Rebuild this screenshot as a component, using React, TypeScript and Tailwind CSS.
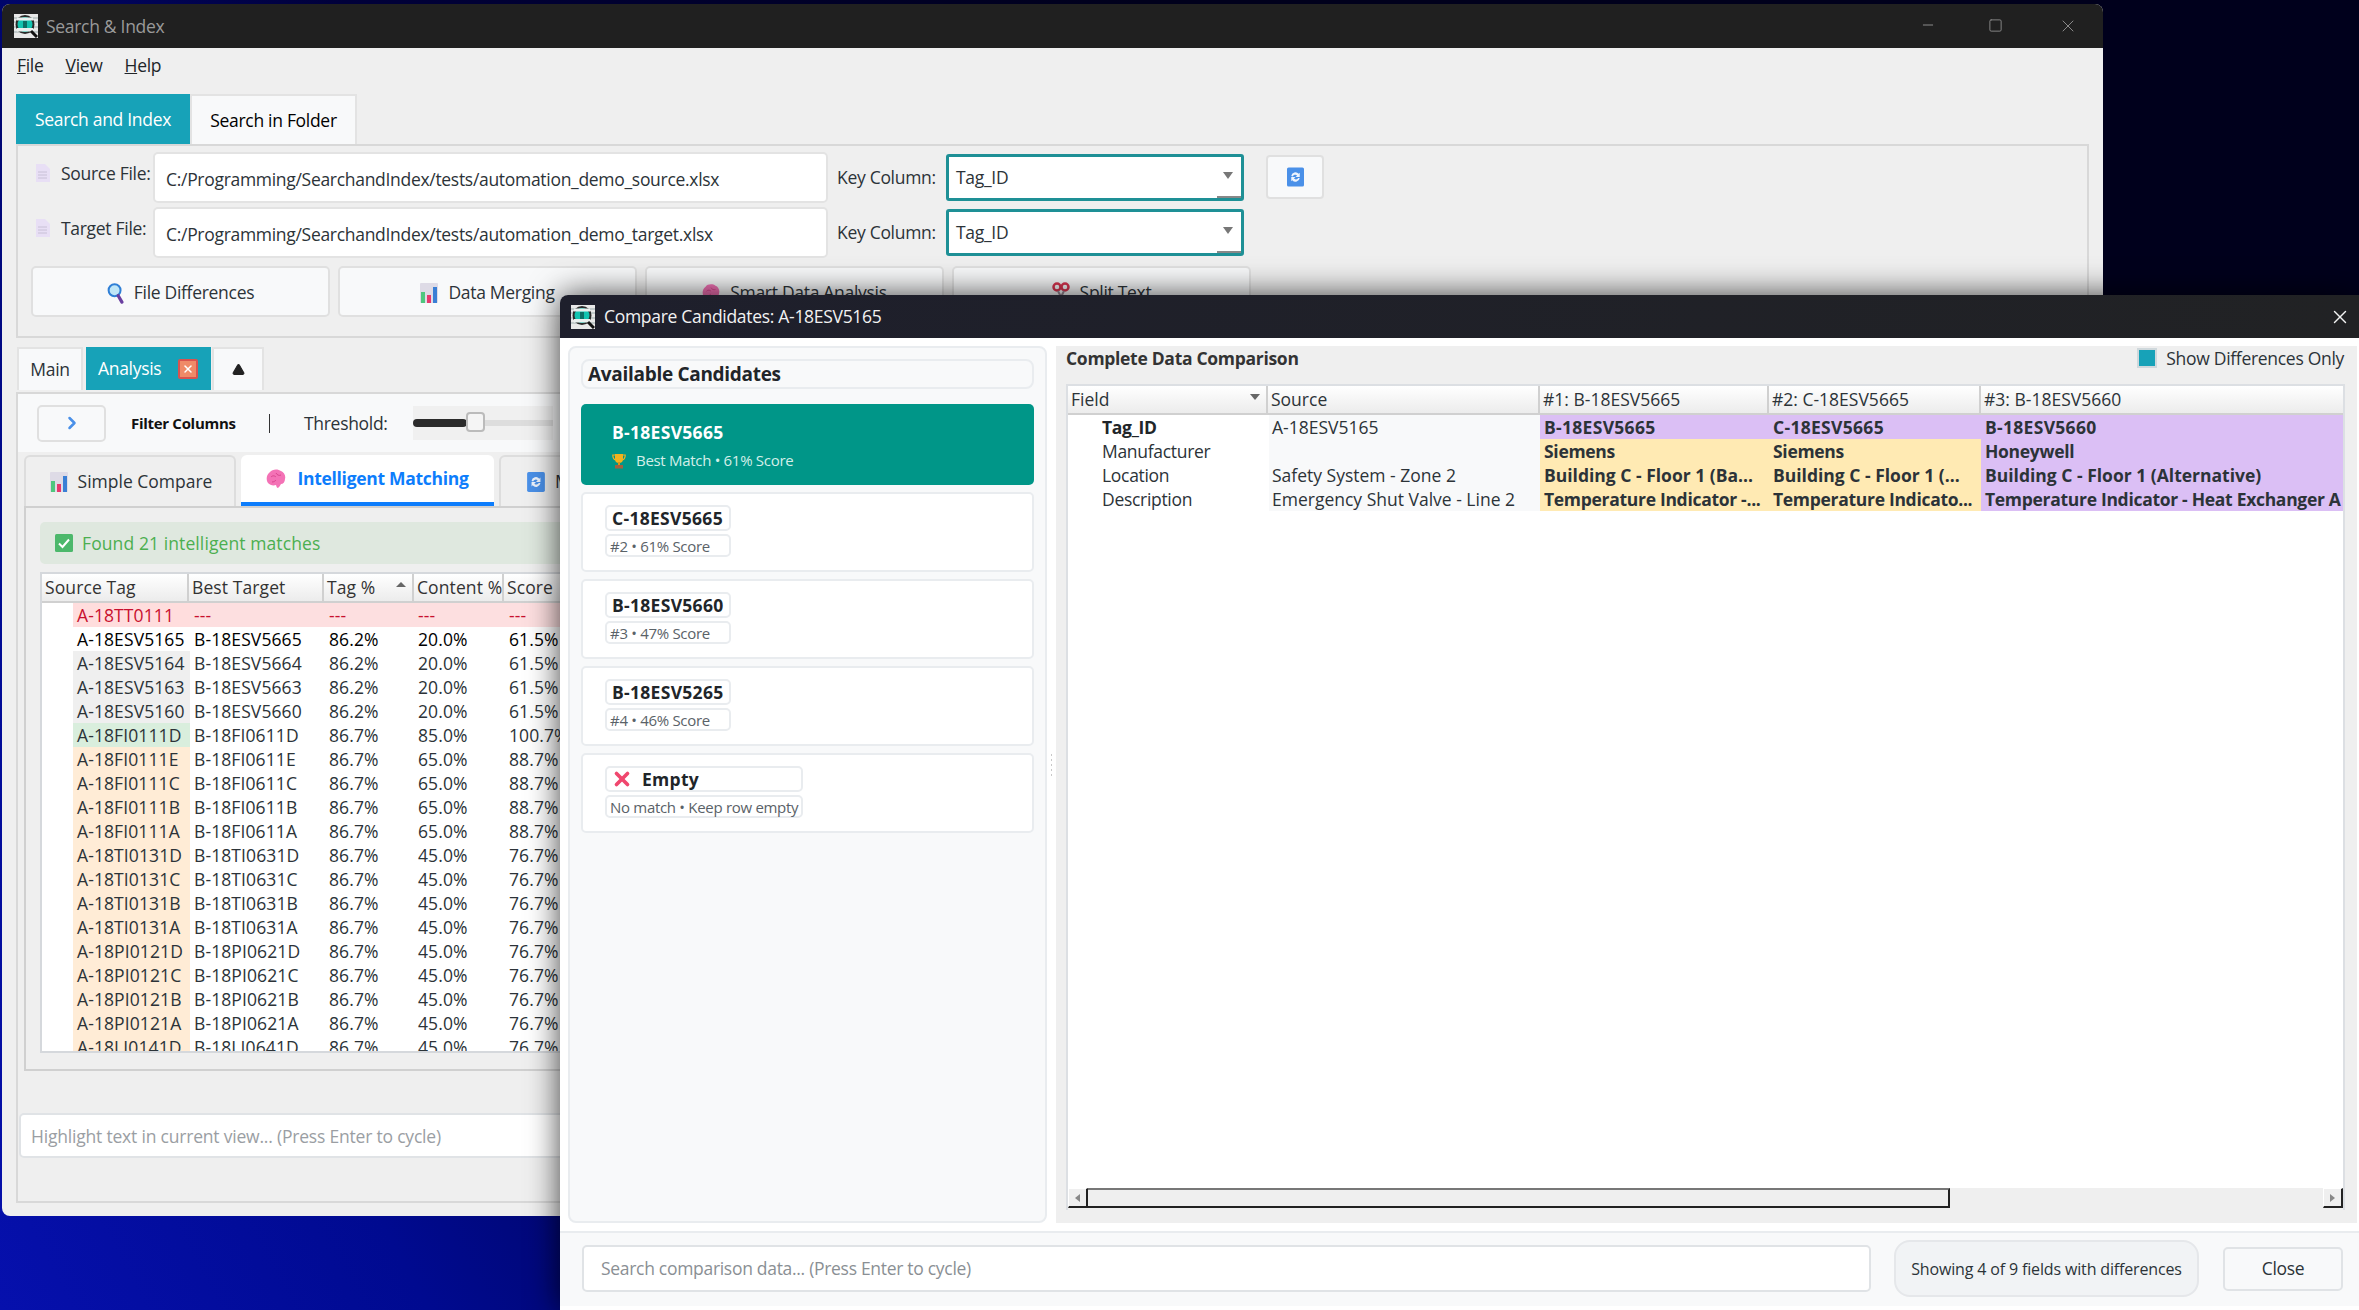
import { X, Minus, Square, ChevronRight, Triangle } from "lucide-react";

function Logo() {
  return (
    <svg viewBox="0 0 24 24" className="w-[24px] h-[24px] shrink-0">
      <rect width="24" height="24" fill="#e8e8e8" />
      <path d="M0 4h24M0 8h24M0 13h24M0 18h24" stroke="#9aa" strokeWidth="1" />
      <circle cx="11" cy="10.5" r="8.5" fill="#12c4b0" stroke="#2a2a2a" strokeWidth="2" />
      <rect x="3" y="3.500" width="16" height="3" fill="#e9efee" />
      <rect x="3" y="14" width="16" height="3.500" fill="#e9efee" />
      <rect x="9" y="7" width="4" height="7" fill="#0b6f66" />
      <path d="M17 17l6 6" stroke="#111" strokeWidth="3" />
    </svg>
  );
}

function PageIcon() {
  return (
    <svg viewBox="0 0 14 18" className="w-[14px] h-[18px] shrink-0">
      <path d="M0 0h9l5 5v13H0z" fill="#e8dff5" />
      <path d="M2 8h9M2 11h9M2 14h9" stroke="#c8c0d6" strokeWidth="1" />
    </svg>
  );
}

function ChartIcon() {
  return (
    <svg viewBox="0 0 18 20" className="w-[18px] h-[20px] shrink-0">
      <rect width="18" height="20" rx="1" fill="#dedbe6" />
      <rect x="1" y="9" width="4" height="11" fill="#4fc77e" />
      <rect x="7" y="12" width="4" height="8" fill="#e8386d" />
      <rect x="13" y="4" width="4" height="16" fill="#3a7fd5" />
    </svg>
  );
}

function LensIcon() {
  return (
    <svg viewBox="0 0 18 24" className="w-[17px] h-[22px] shrink-0">
      <circle cx="8" cy="9" r="6.5" fill="#bfe6f7" stroke="#2f7fd6" strokeWidth="2.2" />
      <path d="M12 15l4 7" stroke="#6a3fa0" strokeWidth="3.5" strokeLinecap="round" />
    </svg>
  );
}

function BrainIcon({ size = "w-[20px] h-[20px]" }: { size?: string }) {
  return (
    <svg viewBox="0 0 20 20" className={size + " shrink-0"}>
      <path
        d="M4 3c2-3 8-3.500 11-1 3 1 5 5 4 8 0 3-2 5-4 5-1 2-2 3-3 4-1 0-1.500-1-2-3-3 1-6 0-8-2-2-3-2-8 2-11z"
        fill="#f472b6"
      />
      <path d="M5 8c2-2 4-1 5 0M10 4c1 2 3 3 5 2M6 13c2 0 3-1 4-2" stroke="#d9468f" strokeWidth="1" fill="none" />
    </svg>
  );
}

function RefreshIcon({ size = "w-[17px] h-[20px]" }: { size?: string }) {
  return (
    <svg viewBox="0 0 16 18" className={size + " shrink-0"}>
      <rect width="16" height="18" rx="1.500" fill="#4a90e8" />
      <path d="M4 8a4 4 0 0 1 7-2l1-1v4H8l1.500-1.500A2.500 2.500 0 0 0 5.500 8.500z" fill="#eef4fd" />
      <path d="M12 10a4 4 0 0 1-7 2l-1 1V9h4l-1.500 1.500a2.500 2.500 0 0 0 4 -.5z" fill="#eef4fd" />
    </svg>
  );
}

function ScissorsIcon() {
  return (
    <svg viewBox="0 0 18 22" className="w-[18px] h-[22px] shrink-0">
      <circle cx="5" cy="5" r="3.500" fill="none" stroke="#d9344f" strokeWidth="2.500" />
      <circle cx="13" cy="5" r="3.500" fill="none" stroke="#d9344f" strokeWidth="2.500" />
      <path d="M6 9l3 6 3-6M9 15v7" stroke="#9a8a96" strokeWidth="2" fill="none" />
    </svg>
  );
}

function TrophyIcon() {
  return (
    <svg viewBox="0 0 14 16" className="w-[14px] h-[16px] shrink-0">
      <path d="M3 1h8v5a4 4 0 0 1-8 0z" fill="#f2b21c" />
      <path d="M3 2H0.800c0 3 1 4.500 3 5M11 2h2.200c0 3-1 4.500-3 5" stroke="#f2b21c" strokeWidth="1.200" fill="none" />
      <rect x="6" y="9" width="2" height="3" fill="#d9941a" />
      <rect x="3" y="12" width="8" height="3.500" fill="#a5603c" />
    </svg>
  );
}

function CheckIcon() {
  return (
    <svg viewBox="0 0 18 18" className="w-[18px] h-[18px] shrink-0">
      <rect width="18" height="18" rx="1.500" fill="#4cb86b" />
      <path d="M4 9.500l3.500 3.500L14 5.500" stroke="#fff" strokeWidth="2" fill="none" />
    </svg>
  );
}

function Combo() {
  return (
    <div className="relative w-[298px] h-[47px] bg-white border-[3px] border-[#1e9096] rounded-[3px] flex items-center pl-[7px] mt-[2px]">
      <span>Tag_ID</span>
      <span className="absolute right-[8px] top-[15px] w-0 h-0 border-l-[5px] border-r-[5px] border-t-[7px] border-l-transparent border-r-transparent border-t-[#777]" />
      <span className="absolute right-0 bottom-0 w-[24px] h-[2px] bg-[#888]" />
    </div>
  );
}

function FileRow({ label, path }: { label: string; path: string }) {
  return (
    <div className="flex h-[51px] items-start">
      <div className="w-[135px] shrink-0 flex items-center gap-[11px] pl-[18px] pt-[8px]">
        <PageIcon />
        <span className="whitespace-nowrap">{label}</span>
      </div>
      <div className="w-[675px] h-[51px] shrink-0 bg-white border-2 border-[#e3e3e3] rounded-[5px] flex items-center pl-[11px] pt-[4px]">
        {path}
      </div>
      <span className="ml-[9px] w-[109px] shrink-0 pt-[12px] whitespace-nowrap">Key Column:</span>
      <Combo />
    </div>
  );
}

function ActionButton({ icon, label }: { icon: React.ReactNode; label: string }) {
  return (
    <div className="w-[299px] h-[51px] shrink-0 bg-[#f8f9fa] border-2 border-[#e0e0e0] rounded-[5px] flex items-center justify-center gap-[10px] pt-[2px]">
      {icon}
      <span>{label}</span>
    </div>
  );
}

type MatchRow = { src: string; target: string; tag: string; content: string; score: string; bg: string; tone: string };

const matchRows: MatchRow[] = [
  { src: "A-18TT0111", target: "---", tag: "---", content: "---", score: "---", bg: "bg-[#fdd]", tone: "miss" },
  { src: "A-18ESV5165", target: "B-18ESV5665", tag: "86.2%", content: "20.0%", score: "61.5%", bg: "bg-white", tone: "selected" },
  { src: "A-18ESV5164", target: "B-18ESV5664", tag: "86.2%", content: "20.0%", score: "61.5%", bg: "bg-[#efefef]", tone: "" },
  { src: "A-18ESV5163", target: "B-18ESV5663", tag: "86.2%", content: "20.0%", score: "61.5%", bg: "bg-[#efefef]", tone: "" },
  { src: "A-18ESV5160", target: "B-18ESV5660", tag: "86.2%", content: "20.0%", score: "61.5%", bg: "bg-[#efefef]", tone: "" },
  { src: "A-18FI0111D", target: "B-18FI0611D", tag: "86.7%", content: "85.0%", score: "100.7%", bg: "bg-[#d9eedd]", tone: "" },
  { src: "A-18FI0111E", target: "B-18FI0611E", tag: "86.7%", content: "65.0%", score: "88.7%", bg: "bg-[#ffecd6]", tone: "" },
  { src: "A-18FI0111C", target: "B-18FI0611C", tag: "86.7%", content: "65.0%", score: "88.7%", bg: "bg-[#ffecd6]", tone: "" },
  { src: "A-18FI0111B", target: "B-18FI0611B", tag: "86.7%", content: "65.0%", score: "88.7%", bg: "bg-[#ffecd6]", tone: "" },
  { src: "A-18FI0111A", target: "B-18FI0611A", tag: "86.7%", content: "65.0%", score: "88.7%", bg: "bg-[#ffecd6]", tone: "" },
  { src: "A-18TI0131D", target: "B-18TI0631D", tag: "86.7%", content: "45.0%", score: "76.7%", bg: "bg-[#ffecd6]", tone: "" },
  { src: "A-18TI0131C", target: "B-18TI0631C", tag: "86.7%", content: "45.0%", score: "76.7%", bg: "bg-[#ffecd6]", tone: "" },
  { src: "A-18TI0131B", target: "B-18TI0631B", tag: "86.7%", content: "45.0%", score: "76.7%", bg: "bg-[#ffecd6]", tone: "" },
  { src: "A-18TI0131A", target: "B-18TI0631A", tag: "86.7%", content: "45.0%", score: "76.7%", bg: "bg-[#ffecd6]", tone: "" },
  { src: "A-18PI0121D", target: "B-18PI0621D", tag: "86.7%", content: "45.0%", score: "76.7%", bg: "bg-[#ffecd6]", tone: "" },
  { src: "A-18PI0121C", target: "B-18PI0621C", tag: "86.7%", content: "45.0%", score: "76.7%", bg: "bg-[#ffecd6]", tone: "" },
  { src: "A-18PI0121B", target: "B-18PI0621B", tag: "86.7%", content: "45.0%", score: "76.7%", bg: "bg-[#ffecd6]", tone: "" },
  { src: "A-18PI0121A", target: "B-18PI0621A", tag: "86.7%", content: "45.0%", score: "76.7%", bg: "bg-[#ffecd6]", tone: "" },
  { src: "A-18LI0141D", target: "B-18LI0641D", tag: "86.7%", content: "45.0%", score: "76.7%", bg: "bg-[#ffecd6]", tone: "" },
];

function HeaderCell({ label, w, arrow }: { label: string; w: string; arrow?: boolean }) {
  return (
    <div className={w + " relative shrink-0 h-[29px] flex items-center pl-[3px] border-r-2 border-b-2 border-[#d0d0d0] bg-gradient-to-b from-white to-[#ececec] whitespace-nowrap text-[#333]"}>
      {label}
      {arrow && <span className="absolute right-[6px] top-[8px] w-0 h-0 border-l-[5px] border-r-[5px] border-b-[5px] border-l-transparent border-r-transparent border-b-[#666]" />}
    </div>
  );
}

function MatchTable() {
  return (
    <div className="w-[1500px] h-[481px] overflow-hidden bg-white border-2 border-[#d5d8dc] ml-[14px] mt-[8px] tracking-[0.1px]">
      <div className="flex">
        <HeaderCell label="Source Tag" w="w-[147px]" />
        <HeaderCell label="Best Target" w="w-[135px]" />
        <HeaderCell label="Tag %" w="w-[90px]" arrow />
        <HeaderCell label="Content %" w="w-[90px]" />
        <HeaderCell label="Score" w="w-[90px]" />
      </div>
      {matchRows.map((r) => {
        const tone = r.tone === "miss" ? "text-[#c8102e]" : r.tone === "selected" ? "text-[#000]" : "text-[#2c3338]";
        return (
          <div key={r.src} className={"flex h-[24px] items-center " + tone + (r.tone === "miss" ? " bg-[#fddfe0]" : "")}>
            <div className={"w-[31px] h-full shrink-0 " + (r.tone === "miss" ? "bg-white" : "")} />
            <div className={"w-[117px] h-full shrink-0 pl-[4px] flex items-center whitespace-nowrap " + r.bg}>{r.src}</div>
            <div className="w-[134px] shrink-0 pl-[4px]">{r.target}</div>
            <div className="w-[90px] shrink-0 pl-[5px]">{r.tag}</div>
            <div className="w-[90px] shrink-0 pl-[4px]">{r.content}</div>
            <div className="w-[90px] shrink-0 pl-[5px]">{r.score}</div>
          </div>
        );
      })}
    </div>
  );
}

function MainWindow() {
  return (
    <div className="absolute left-[2px] top-[4px] w-[2101px] h-[1212px] bg-[#efefef] rounded-[8px] overflow-hidden flex flex-col">
      <div className="h-[44px] shrink-0 bg-[#202020] flex items-center pl-[12px] text-[#9a9a9a] relative">
        <Logo />
        <span className="ml-[8px]">Search &amp; Index</span>
        <Minus className="absolute left-[1918px] top-[13px] w-[16px] h-[16px] text-[#8a8a8a]" strokeWidth={1.5} />
        <Square className="absolute left-[1986px] top-[14px] w-[15px] h-[15px] text-[#8a8a8a]" strokeWidth={1.5} />
        <X className="absolute left-[2056px] top-[12px] w-[20px] h-[20px] text-[#8a8a8a]" strokeWidth={1.2} />
      </div>
      <div className="h-[46px] shrink-0 flex items-center gap-[22px] pl-[15px] pb-[12px] text-[#212529]">
        <span><u>F</u>ile</span>
        <span><u>V</u>iew</span>
        <span><u>H</u>elp</span>
      </div>
      <div className="flex ml-[14px] h-[50px] shrink-0">
        <div className="w-[174px] bg-[#17a2b8] text-white flex items-center justify-center">Search and Index</div>
        <div className="w-[167px] bg-[#f8f9fa] border-2 border-b-0 border-[#e3e3e3] flex items-center justify-center">Search in Folder</div>
      </div>
      <div className="ml-[14px] w-[2073px] h-[194px] shrink-0 border-2 border-[#d8d8d8] pt-[6px] text-[#2c3338] relative">
        <FileRow label="Source File:" path="C:/Programming/SearchandIndex/tests/automation_demo_source.xlsx" />
        <div className="h-[4px]" />
        <FileRow label="Target File:" path="C:/Programming/SearchandIndex/tests/automation_demo_target.xlsx" />
        <div className="flex gap-[8px] ml-[13px] mt-[8px]">
          <ActionButton icon={<LensIcon />} label="File Differences" />
          <ActionButton icon={<ChartIcon />} label="Data Merging" />
          <ActionButton icon={<BrainIcon size="w-[18px] h-[18px]" />} label="Smart Data Analysis" />
          <ActionButton icon={<ScissorsIcon />} label="Split Text" />
        </div>
        <div className="absolute left-[1248px] top-[9px] w-[58px] h-[44px] bg-[#f8f9fa] border-2 border-[#e0e0e0] rounded-[4px] flex items-center justify-center">
          <RefreshIcon />
        </div>
      </div>
      <div className="flex ml-[15px] mt-[9px] h-[43px] shrink-0 text-[#2c3338]">
        <div className="w-[66px] bg-[#f8f9fa] border-2 border-b-0 border-[#e3e3e3] flex items-center justify-center">Main</div>
        <div className="ml-[3px] w-[125px] bg-[#17a2b8] text-white flex items-center pl-[12px] gap-[17px]">
          Analysis
          <span className="w-[20px] h-[20px] shrink-0 bg-[#ef8a68] border-2 border-[#d9534f] rounded-[2px] flex items-center justify-center">
            <X className="w-[12px] h-[12px] text-white" strokeWidth={3} />
          </span>
        </div>
        <div className="ml-[1px] w-[52px] bg-[#f8f9fa] border-2 border-b-0 border-[#e3e3e3] flex items-center justify-center">
          <Triangle className="w-[15px] h-[13px] text-[#222] fill-[#222]" />
        </div>
      </div>
      <div className="ml-[14px] mt-[2px] w-[2073px] flex-1 border-2 border-[#d8d8d8] text-[#2c3338] flex flex-col mb-[13px]">
        <div className="h-[58px] shrink-0 bg-[#f8f9fa] flex items-center pl-[19px]">
          <div className="w-[69px] h-[37px] bg-[#f8f9fa] border-2 border-[#e0e0e0] rounded-[5px] flex items-center justify-center">
            <ChevronRight className="w-[20px] h-[20px] text-[#4a90e8]" strokeWidth={3} />
          </div>
          <span className="ml-[25px] w-[102px] font-bold text-[15px] text-[#111] whitespace-nowrap">Filter Columns</span>
          <span className="ml-[36px] w-px h-[19px] bg-[#333]" />
          <span className="ml-[34px] w-[82px] whitespace-nowrap">Threshold:</span>
          <div className="ml-[27px] w-[140px] h-[34px] bg-[#f0f0f0] flex items-center relative">
            <div className="w-[54px] h-[8px] rounded-full bg-[#2b2b2b]" />
            <div className="w-[86px] h-[6px] bg-[#ddd]" />
            <span className="absolute left-[53px] top-[6px] w-[19px] h-[20px] bg-[#f5f5f5] border-2 border-[#bbb] rounded-[4px]" />
          </div>
        </div>
        <div className="flex ml-[6px] mt-[3px] h-[51px] shrink-0">
          <div className="w-[212px] border-2 border-b-0 border-[#ddd] bg-[#efefef] rounded-t-[6px] flex items-center justify-center gap-[10px] tracking-[0px] pl-[2px]">
            <ChartIcon />
            Simple Compare
          </div>
          <div className="ml-[5px] w-[253px] bg-white border-b-[4px] border-[#0d7dfc] rounded-t-[6px] flex items-center justify-center gap-[11px] text-[#0d7dfc] font-bold">
            <BrainIcon />
            Intelligent Matching
          </div>
          <div className="ml-[5px] w-[300px] border-2 border-b-0 border-[#ddd] bg-[#efefef] rounded-t-[6px] flex items-center pl-[26px] gap-[10px]">
            <RefreshIcon size="w-[18px] h-[20px]" />
            Manual
          </div>
        </div>
        <div className="ml-[6px] mr-[6px] h-[565px] shrink-0 border-2 border-[#d0d0d0] pt-[14px]">
          <div className="ml-[14px] h-[42px] w-[1500px] bg-[#dfe8df] rounded-[5px] flex items-center pl-[15px] gap-[9px] text-[#4caf50] tracking-[0.1px]">
            <CheckIcon />
            Found 21 intelligent matches
          </div>
          <MatchTable />
        </div>
        <div className="mt-[42px] ml-[1px] w-[1800px] h-[45px] bg-white border-2 border-[#e0e3e6] rounded-[5px] flex items-center pl-[10px] pt-[2px] text-[#9a9ea3] tracking-[-0.2px]">
          Highlight text in current view... (Press Enter to cycle)
        </div>
      </div>
    </div>
  );
}

function Candidate({ name, sub, icon, wide }: { name: string; sub: string; icon?: boolean; wide?: boolean }) {
  const w = wide ? "w-[198px]" : "w-[126px]";
  return (
    <div className="h-[80px] bg-white border-2 border-[#e9ecef] rounded-[5px] pl-[22px] pt-[11px] flex flex-col gap-[3px]">
      <div className={w + " h-[26px] border-2 border-[#e9ecef] rounded-[5px] flex items-center pl-[5px] gap-[9px] font-bold text-[#212529] tracking-[0.3px]"}>
        {icon && <X className="w-[22px] h-[22px] text-[#f0476e] -ml-[1px]" strokeWidth={4} />}
        {name}
      </div>
      <div className={w + " h-[23px] border-2 border-[#e9ecef] rounded-[5px] flex items-center pl-[3px] pt-[1px] text-[15px] text-[#5a6268] whitespace-nowrap"}>
        {sub}
      </div>
    </div>
  );
}

const compareRows = [
  {
    field: "Tag_ID",
    bold: true,
    source: "A-18ESV5165",
    a: "B-18ESV5665",
    b: "C-18ESV5665",
    c: "B-18ESV5660",
    tone: "bg-[#dbbff5]",
    track: "tracking-[0.3px]",
  },
  {
    field: "Manufacturer",
    source: "",
    a: "Siemens",
    b: "Siemens",
    c: "Honeywell",
    tone: "bg-[#ffeab3]",
    track: "",
  },
  {
    field: "Location",
    source: "Safety System - Zone 2",
    a: "Building C - Floor 1 (Ba...",
    b: "Building C - Floor 1 (...",
    c: "Building C - Floor 1 (Alternative)",
    tone: "bg-[#ffeab3]",
    track: "tracking-[0px]",
  },
  {
    field: "Description",
    source: "Emergency Shut Valve - Line 2",
    a: "Temperature Indicator -...",
    b: "Temperature Indicato...",
    c: "Temperature Indicator - Heat Exchanger A",
    tone: "bg-[#ffeab3]",
    track: "",
  },
];

function CompareDialog() {
  return (
    <div className="absolute left-[560px] top-[295px] w-[1799px] h-[1015px] bg-white rounded-tl-[8px] overflow-hidden flex flex-col shadow-[0_0_32px_rgba(0,0,0,0.75)] text-[#2c3338]">
      <div className="h-[43px] shrink-0 bg-gradient-to-r from-[#1e1f2c] to-[#212224] flex items-center pl-[11px] text-[#f2f2f2] relative">
        <Logo />
        <span className="ml-[9px]">Compare Candidates: A-18ESV5165</span>
        <X className="absolute right-[8px] top-[11px] w-[22px] h-[22px] text-[#f2f2f2]" strokeWidth={1.5} />
      </div>
      <div className="flex pt-[8px] pl-[8px] pr-[2px] h-[885px] shrink-0">
        <div className="w-[479px] shrink-0 bg-[#f8f9fa] border-2 border-[#e9ecef] rounded-[8px] px-[11px] pt-[11px] flex flex-col">
          <div className="h-[30px] border-2 border-[#e9ecef] rounded-[8px] flex items-center pl-[5px] font-bold text-[19px] text-[#212529]">
            Available Candidates
          </div>
          <div className="mt-[15px] h-[81px] bg-[#009688] rounded-[5px] pl-[31px] pt-[15px] text-white">
            <div className="font-bold tracking-[0.3px]">B-18ESV5665</div>
            <div className="mt-[4px] flex items-center gap-[10px] text-[15px] text-[#d4efe9]">
              <TrophyIcon />
              Best Match • 61% Score
            </div>
          </div>
          <div className="mt-[7px] flex flex-col gap-[7px]">
            <Candidate name="C-18ESV5665" sub="#2 • 61% Score" />
            <Candidate name="B-18ESV5660" sub="#3 • 47% Score" />
            <Candidate name="B-18ESV5265" sub="#4 • 46% Score" />
            <Candidate name="Empty" sub="No match • Keep row empty" icon wide />
          </div>
        </div>
        <div className="w-[9px] shrink-0 flex flex-col items-center justify-center gap-[3px] pb-[40px]">
          <span className="w-[1px] h-[2px] bg-[#c8c8c8]" />
          <span className="w-[1px] h-[2px] bg-[#c8c8c8]" />
          <span className="w-[1px] h-[2px] bg-[#c8c8c8]" />
          <span className="w-[1px] h-[2px] bg-[#c8c8c8]" />
          <span className="w-[1px] h-[2px] bg-[#c8c8c8]" />
        </div>
        <div className="flex-1 bg-[#efefef] pl-[10px] pr-[12px] flex flex-col">
          <div className="h-[38px] shrink-0 flex items-center justify-between pb-[14px]">
            <span className="font-bold text-[#333]">Complete Data Comparison</span>
            <span className="flex items-center gap-[9px] mr-[1px]">
              <span className="w-[20px] h-[20px] bg-[#17a2b8] border-2 border-[#cfd8dc]" />
              Show Differences Only
            </span>
          </div>
          <div className="w-[1279px] h-[826px] shrink-0 bg-white border-2 border-[#dcdfe3] border-b-0 flex flex-col relative">
            <div className="flex tracking-[0px]">
              <div className="w-[200px] shrink-0 h-[29px] relative flex items-center pl-[3px] border-r-2 border-b-2 border-[#d0d0d0] bg-gradient-to-b from-white to-[#ececec]">
                Field
                <span className="absolute right-[6px] top-[8px] w-0 h-0 border-l-[5px] border-r-[5px] border-t-[6px] border-l-transparent border-r-transparent border-t-[#666]" />
              </div>
              <div className="w-[272px] shrink-0 h-[29px] flex items-center pl-[3px] border-r-2 border-b-2 border-[#d0d0d0] bg-gradient-to-b from-white to-[#ececec]">Source</div>
              <div className="w-[229px] shrink-0 h-[29px] flex items-center pl-[3px] border-r-2 border-b-2 border-[#d0d0d0] bg-gradient-to-b from-white to-[#ececec]">#1: B-18ESV5665</div>
              <div className="w-[212px] shrink-0 h-[29px] flex items-center pl-[3px] border-r-2 border-b-2 border-[#d0d0d0] bg-gradient-to-b from-white to-[#ececec]">#2: C-18ESV5665</div>
              <div className="flex-1 h-[29px] flex items-center pl-[3px] border-b-2 border-[#d0d0d0] bg-gradient-to-b from-white to-[#ececec]">#3: B-18ESV5660</div>
            </div>
            {compareRows.map((r) => (
              <div key={r.field} className="flex h-[24px] items-center">
                <div className={"w-[201px] shrink-0 pl-[34px] " + (r.bold ? "font-bold text-[#212529]" : "")}>{r.field}</div>
                <div className="w-[271px] h-full shrink-0 bg-[#f8f9fa] pl-[3px] flex items-center tracking-[0px]">{r.source}</div>
                <div className={"w-[229px] h-full shrink-0 pl-[4px] flex items-center font-bold whitespace-nowrap " + r.tone + " " + r.track}>{r.a}</div>
                <div className={"w-[212px] h-full shrink-0 pl-[4px] flex items-center font-bold whitespace-nowrap " + r.tone + " " + r.track}>{r.b}</div>
                <div className={"flex-1 h-full bg-[#dbbff5] pl-[4px] flex items-center font-bold whitespace-nowrap " + r.track}>{r.c}</div>
              </div>
            ))}
            <div className="absolute left-0 right-0 bottom-0 h-[22px] bg-[#efefef] flex">
              <div className="w-[20px] h-[20px] bg-[#efefef] border-r-2 border-b-2 border-[#222] border-t border-l border-t-white border-l-white flex items-center justify-center">
                <span className="w-0 h-0 border-t-[4px] border-b-[4px] border-r-[5px] border-t-transparent border-b-transparent border-r-[#888]" />
              </div>
              <div className="w-[862px] h-[20px] bg-[#efefef] border-t-2 border-t-[#777] border-r-2 border-b-2 border-[#222]" />
              <div className="flex-1" />
              <div className="w-[20px] h-[20px] border-r-2 border-b-2 border-[#222] border-t border-l border-t-white border-l-white flex items-center justify-center">
                <span className="w-0 h-0 border-t-[4px] border-b-[4px] border-l-[5px] border-t-transparent border-b-transparent border-l-[#888]" />
              </div>
            </div>
          </div>
        </div>
      </div>
      <div className="mt-[8px] h-[75px] shrink-0 border-t-2 border-[#e9ecef] bg-[#f8f9fa] flex items-center pl-[22px] pb-[2px]">
        <div className="w-[1289px] h-[47px] bg-white border-2 border-[#e0e3e6] rounded-[5px] flex items-center pl-[17px] text-[#8a8f94]">
          Search comparison data... (Press Enter to cycle)
        </div>
        <div className="ml-[23px] w-[305px] h-[57px] bg-[#f1f3f5] border-2 border-[#e5e7ea] rounded-[16px] flex items-center justify-center text-[16px] tracking-[-0.15px]">
          Showing 4 of 9 fields with differences
        </div>
        <div className="ml-[24px] w-[120px] h-[44px] bg-[#f8f9fa] border-2 border-[#e0e3e6] rounded-[5px] flex items-center justify-center">
          Close
        </div>
      </div>
    </div>
  );
}

export default function App() {
  return (
    <div className="relative w-[2359px] h-[1310px] overflow-hidden bg-[linear-gradient(62deg,#0610ad_0%,#000a90_14%,#00003a_34%,#00001c_60%)] font-['Open_Sans',sans-serif] text-[17.5px] tracking-[-0.3px]">
      <MainWindow />
      <CompareDialog />
    </div>
  );
}
